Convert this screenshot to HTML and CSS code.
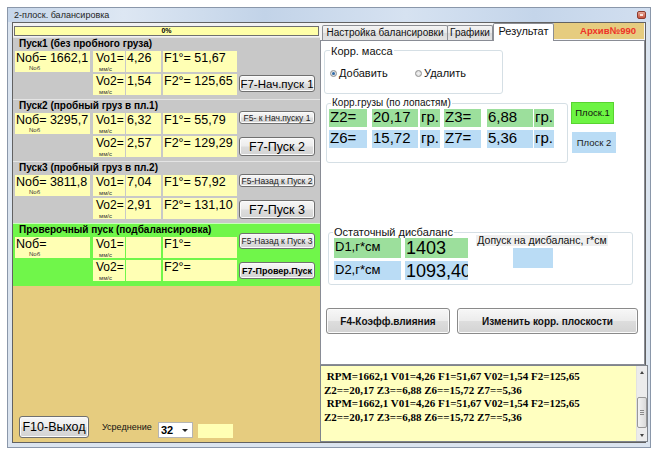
FILE: index.html
```html
<!DOCTYPE html>
<html lang="ru">
<head>
<meta charset="utf-8">
<title>2-плоск. балансировка</title>
<link rel="stylesheet" href="styles.css">
</head>
<body>
<div class="win">
  <div class="titlebar"><span class="ttl">2-плоск. балансировка</span><span class="closeb"><span></span></span></div>
  <div class="client">
    <div class="left">
      <div class="pw"><div class="prog">0%</div></div>

      <div class="grp">
        <div class="gt">Пуск1 (без пробного груза)</div>
        <div class="row">
          <div class="c nob">Nоб= 1662,1<span class="sub sub-n">Nоб</span></div>
          <div class="c vo">Vo1=<span class="sub sub-v">мм/с</span></div>
          <div class="c val">4,26</div>
          <div class="c fv">F1°= 51,67</div>
        </div>
        <div class="row">
          <div class="nob"></div>
          <div class="c vo">Vo2=<span class="sub sub-v">мм/с</span></div>
          <div class="c val">1,54</div>
          <div class="c fv">F2°= 125,65</div>
          <div class="btn b1">F7-Нач.пуск 1</div>
        </div>
      </div>

      <div class="grp">
        <div class="gt">Пуск2 (пробный груз в пл.1)</div>
        <div class="row">
          <div class="c nob">Nоб= 3295,7<span class="sub sub-n">Nоб</span></div>
          <div class="c vo">Vo1=<span class="sub sub-v">мм/с</span></div>
          <div class="c val">6,32</div>
          <div class="c fv">F1°= 55,79</div>
          <div class="btn bs bs2">F5- к Нач.пуску 1</div>
        </div>
        <div class="row">
          <div class="nob"></div>
          <div class="c vo">Vo2=<span class="sub sub-v">мм/с</span></div>
          <div class="c val">2,57</div>
          <div class="c fv">F2°= 129,29</div>
          <div class="btn b2">F7-Пуск 2</div>
        </div>
      </div>

      <div class="grp">
        <div class="gt">Пуск3 (пробный груз в пл.2)</div>
        <div class="row">
          <div class="c nob">Nоб= 3811,8<span class="sub sub-n">Nоб</span></div>
          <div class="c vo">Vo1=<span class="sub sub-v">мм/с</span></div>
          <div class="c val">7,04</div>
          <div class="c fv">F1°= 57,92</div>
          <div class="btn bs bs3">F5-Назад к Пуск 2</div>
        </div>
        <div class="row">
          <div class="nob"></div>
          <div class="c vo">Vo2=<span class="sub sub-v">мм/с</span></div>
          <div class="c val">2,91</div>
          <div class="c fv">F2°= 131,10</div>
          <div class="btn b3">F7-Пуск 3</div>
        </div>
      </div>

      <div class="grp green">
        <div class="gt">Проверочный пуск (подбалансировка)</div>
        <div class="row">
          <div class="c nob">Nоб=<span class="sub sub-n">Nоб</span></div>
          <div class="c vo">Vo1=<span class="sub sub-v">мм/с</span></div>
          <div class="c val"></div>
          <div class="c fv">F1°=</div>
          <div class="btn bs bs4">F5-Назад к Пуск 3</div>
        </div>
        <div class="row">
          <div class="nob"></div>
          <div class="c vo">Vo2=<span class="sub sub-v">мм/с</span></div>
          <div class="c val"></div>
          <div class="c fv">F2°=</div>
          <div class="btn b4">F7-Провер.Пуск</div>
        </div>
      </div>

      <div class="fill">
        <div class="btn bexit">F10-Выход</div>
        <span class="avg">Усреднение</span>
        <div class="combo"><span>32</span><i class="dd"></i></div>
        <div class="ybox"></div>
      </div>
    </div>

    <div class="right">
      <div class="tabs">
        <div class="tab t1">Настройка балансировки</div>
        <div class="tab t2">Графики</div>
        <div class="tab sel">Результат</div>
        <div class="arch">Архив№990</div>
      </div>
      <div class="page">
        <div class="gbox kmass">
          <div class="gbt">Корр. масса</div>
          <div class="radios">
            <label class="rad r1"><i class="rb on"></i>Добавить</label>
            <label class="rad"><i class="rb"></i>Удалить</label>
          </div>
        </div>

        <div class="zrow">
          <div class="gbox kgr">
            <div class="gbt small">Корр.грузы (по лопастям)</div>
            <div class="zg">
              <div class="zr gr">
                <div class="z w38">Z2=</div><div class="z w46 m5">20,17</div><div class="z w20 m2">гр.</div>
                <div class="z w37 m4">Z3=</div><div class="z w46 m6">6,88</div><div class="z w20 m1">гр.</div>
              </div>
              <div class="zr bl">
                <div class="z w38">Z6=</div><div class="z w46 m5">15,72</div><div class="z w20 m2">гр.</div>
                <div class="z w37 m4">Z7=</div><div class="z w46 m6">5,36</div><div class="z w20 m1">гр.</div>
              </div>
            </div>
          </div>
          <div class="pl">
            <div class="pl1">Плоск.1</div>
            <div class="pl2">Плоск 2</div>
          </div>
        </div>

        <div class="gbox ost">
          <div class="gbt">Остаточный дисбаланс</div>
          <div class="ostb">
            <div class="dg">
              <div class="dr gr"><div class="dl">D1,г*см</div><div class="dv">1403</div></div>
              <div class="dr bl"><div class="dl">D2,г*см</div><div class="dv">1093,40</div></div>
            </div>
            <div class="dop">
              <div class="dopl">Допуск на дисбаланс, г*см</div>
              <div class="dopv"></div>
            </div>
          </div>
        </div>

        <div class="brow">
          <div class="btn bb bf4">F4-Коэфф.влияния</div>
          <div class="btn bb bchg">Изменить корр. плоскости</div>
        </div>
      </div>

      <div class="log">
        <div class="logt"> RPM=1662,1 V01=4,26 F1=51,67 V02=1,54 F2=125,65
Z2==20,17 Z3==6,88 Z6==15,72 Z7==5,36
 RPM=1662,1 V01=4,26 F1=51,67 V02=1,54 F2=125,65
Z2==20,17 Z3==6,88 Z6==15,72 Z7==5,36</div>
        <div class="sb">
          <div class="sba"><i class="up"></i></div>
          <div class="thumb"><i></i><i></i><i></i></div>
          <div class="sbf"></div>
          <div class="sba"><i class="down"></i></div>
        </div>
      </div>
    </div>
  </div>
</div>
</body>
</html>
```

FILE: styles.css
```css
* { box-sizing: border-box; }
html, body { margin: 0; padding: 0; background: #fff; }
body {
  font-family: "Liberation Sans", Arial, sans-serif;
  color: #000;
  width: 662px;
  height: 458px;
  overflow: hidden;
}

.win {
  margin: 7px 0 0 7px;
  width: 644px;
  height: 441px;
  border: 1px solid #8a97aa;
  background: #dbe4ef;
  padding: 0 4px 4px 4px;
  display: flex;
  flex-direction: column;
}
.titlebar {
  height: 14px;
  margin: 0 -4px;
  padding: 0 4px 0 6px;
  display: flex;
  align-items: center;
  justify-content: space-between;
  background: linear-gradient(90deg, #c6d6ea 0%, #dde7f3 18%, #c2d3e8 40%, #d6e2f1 62%, #c4d5ea 82%, #d2dff0 100%);
}
.ttl { font-size: 9px; line-height: 12px; color: #1e1e1e; }
.closeb {
  width: 9px; height: 8px;
  border: 1px solid #8e3a2c;
  border-radius: 2px;
  background: linear-gradient(#e8a898, #c4533e);
  display: flex; align-items: center; justify-content: center;
}
.closeb span { width: 3px; height: 2px; background: #fbe3dc; }

.client {
  flex: 1;
  border: 1px solid #626262;
  display: flex;
  background: #f2f2f2;
}
.left { width: 307px; display: flex; flex-direction: column; }
.right { flex: 1; display: flex; flex-direction: column; min-width: 0; }

/* progress */
.pw { height: 14px; padding: 3px 1px 0 1px; background: #f2f2f2; }
.prog {
  height: 10px;
  border: 1px solid #6f6f6f;
  background: #ffffa8;
  font: bold 7px/8px "Liberation Sans", Arial, sans-serif;
  text-align: center;
}

/* groups */
.grp {
  height: 62px;
  background: #c8c8c8;
  border-top: 1px solid #e4e4e4;
  padding-left: 2px;
}
.grp.green { height: 63px; background: #70f64a; border-top-color: #c9ffbd; }
.gt {
  height: 13px;
  padding-left: 4px;
  font: bold 10px/11px "Liberation Sans", Arial, sans-serif;
  white-space: nowrap;
}
.row { display: flex; align-items: flex-start; height: 21px; }
.row + .row { margin-top: 2px; }
.c {
  background: #ffffb4;
  height: 21px;
  font: 12.5px/14px "Liberation Sans", Arial, sans-serif;
  white-space: nowrap;
  overflow: hidden;
}
.nob { width: 75px; margin-right: 3px; padding-left: 1px; flex: none; }
.vo { width: 32px; margin-right: 1px; padding-left: 3px; flex: none; font-size: 12px; }
.val { width: 35px; margin-right: 2px; padding-left: 1px; flex: none; }
.fv { width: 74px; margin-right: 2px; padding-left: 1px; flex: none; }
.sub { display: block; font-size: 6px; line-height: 6px; color: #333; }
.sub-n { margin: 0 0 0 13px; }
.sub-v { margin: 1px 0 0 3px; }

.btn {
  flex: none;
  display: flex;
  align-items: center;
  justify-content: center;
  white-space: nowrap;
  border: 1px solid #707070;
  border-radius: 3px;
  background: linear-gradient(#f7f7f7 0%, #ececec 48%, #dddddd 52%, #d3d3d3 100%);
  box-shadow: inset 0 0 0 1px #fbfbfb;
  font-family: "Liberation Sans", Arial, sans-serif;
  color: #000;
}
.b1 { width: 76px; height: 17px; margin-top: 1px; font-size: 11.5px; }
.b2 { width: 76px; height: 19px; margin-top: 1px; font-size: 12.5px; }
.b3 { width: 76px; height: 19px; margin-top: 2px; font-size: 12.5px; }
.b4 { width: 76px; height: 17px; margin-top: 2px; font-size: 9px; font-weight: bold; }
.bs { width: 76px; font-size: 8.5px; color: #222; }
.bs2 { height: 13px; margin-top: -2px; }
.bs3 { height: 13px; margin-top: -1px; }
.bs4 { height: 16px; margin-top: -4px; }

.fill {
  flex: 1;
  background: #e6cc7f;
  display: flex;
  align-items: flex-end;
  padding: 0 0 4px 6px;
}
.bexit { width: 70px; height: 22px; font-size: 12.5px; }
.avg { margin: 0 0 5px 13px; font-size: 9px; line-height: 11px; width: 51px; white-space: nowrap; color: #111; }
.combo {
  margin-left: 5px;
  width: 35px; height: 16px;
  background: #fff;
  border: 1px solid #b4b4b4;
  display: flex; align-items: center; justify-content: space-between;
  padding: 0 4px 0 2px;
  font: bold 11px/14px "Liberation Sans", Arial, sans-serif;
}
.dd { width: 0; height: 0; border-left: 3px solid transparent; border-right: 3px solid transparent; border-top: 3px solid #222; }
.ybox { margin-left: 5px; width: 35px; height: 14px; background: #ffffb4; }

/* tabs */
.tabs {
  height: 17px;
  display: flex;
  align-items: flex-end;
  padding-left: 2px;
  background: #f4f4f4;
}
.tab {
  height: 15px;
  border: 1px solid #8c8e94;
  border-bottom: none;
  border-radius: 2px 2px 0 0;
  background: linear-gradient(#f4f4f4 0%, #e9e9e9 48%, #dadada 52%, #e3e3e3 100%);
  font-size: 10px;
  line-height: 13px;
  text-align: center;
  white-space: nowrap;
  color: #111;
}
.t1 { width: 126px; }
.t2 { width: 46px; margin-left: -1px; }
.tab.sel {
  width: 61px;
  height: 18px;
  margin-bottom: -1px;
  background: #fff;
  font-size: 11px;
  line-height: 15px;
  position: relative;
  z-index: 1;
}
.arch {
  align-self: flex-start;
  width: 90px;
  height: 16px;
  background: #e6cc7f;
  color: #ee3327;
  font-weight: bold;
  font-size: 9.5px;
  line-height: 16px;
  text-align: right;
  padding-right: 8px;
}

.page {
  height: 325px;
  border: 1px solid #898c95;
  background: #fff;
}
.gbox { border: 1px solid #d5dfe5; border-radius: 3px; }
.gbt {
  width: fit-content;
  background: #fff;
  padding: 0 1px;
  margin: -7px 0 0 4px;
  font-size: 11px;
  line-height: 14px;
  white-space: nowrap;
  color: #111;
}
.gbt.small { font-size: 10px; line-height: 12px; }

.kmass { margin: 9px 0 0 3px; width: 179px; height: 44px; }
.kmass .gbt { margin-left: 5px; }
.radios { display: flex; margin-top: 8px; padding-left: 5px; height: 14px; align-items: center; }
.rad { display: flex; align-items: center; font-size: 11px; line-height: 14px; color: #111; }
.r1 { width: 85px; }
.rb {
  width: 7px; height: 7px;
  border-radius: 50%;
  border: 1px solid #8f8f8f;
  background: radial-gradient(circle, #f4f4f4, #d4d4d4);
  margin-right: 2px;
  display: flex; align-items: center; justify-content: center;
}
.rb.on::after { content: ""; width: 3px; height: 3px; border-radius: 50%; background: #2f6aa8; }

.zrow { display: flex; margin: 9px 0 0 5px; }
.kgr { width: 242px; height: 60px; }
.zg { padding-left: 2px; }
.zr { display: flex; height: 18px; }
.zr + .zr { margin-top: 3px; }
.z { height: 18px; font-size: 15px; line-height: 15px; white-space: nowrap; overflow: hidden; padding-left: 1px; }
.gr .z, .gr .dl, .gr .dv { background: #9cdf9c; }
.bl .z, .bl .dl, .bl .dv { background: #badcf5; }
.w38 { width: 38px; } .w46 { width: 46px; } .w20 { width: 20px; } .w37 { width: 37px; }
.m5 { margin-left: 5px; } .m2 { margin-left: 2px; } .m4 { margin-left: 4px; } .m6 { margin-left: 6px; } .m1 { margin-left: 1px; }
.pl { margin: -1px 0 0 3px; }
.pl1 {
  width: 43px; height: 22px;
  background: #6df443;
  border: 1px solid #58d330;
  font-size: 9.5px; line-height: 20px; text-align: center; color: #111;
}
.pl2 {
  width: 44px; height: 21px;
  margin: 8px 0 0 1px;
  background: #badcf5;
  font-size: 9.5px; line-height: 21px; text-align: center; color: #222;
}

.ost { margin: 69px 0 0 7px; width: 305px; height: 53px; }
.ost .gbt { line-height: 12px; }
.ostb { display: flex; align-items: flex-start; padding-left: 5px; }
.dr { display: flex; height: 20px; }
.dr + .dr { margin-top: 3px; height: 19px; }
.dl { width: 67px; padding-left: 1px; font-size: 13px; line-height: 17px; }
.dv { width: 63px; margin-left: 4px; padding-left: 1px; font-size: 18px; line-height: 20px; white-space: nowrap; overflow: hidden; }
.dop { margin: -3px 0 0 8px; }
.dopl { width: 132px; height: 11px; background: #efefef; font-size: 10.5px; line-height: 11px; text-align: center; white-space: nowrap; color: #111; }
.dopv { width: 40px; height: 20px; margin: 2px 0 0 37px; background: #badcf5; }

.brow { display: flex; margin: 23px 0 0 5px; }
.bb { height: 26px; font: bold 10px "Liberation Sans", Arial, sans-serif; color: #111; border-color: #8a8a8a; }
.bf4 { width: 124px; }
.bchg { width: 181px; margin-left: 7px; }

/* log */
.log {
  flex: 1;
  margin-right: -3px;
  display: flex;
  border: 1px solid #7f848c;
  background: #ffffc0;
}
.logt {
  flex: 1;
  padding: 4px 0 0 3px;
  font: bold 11px/13.5px "Liberation Serif", "Times New Roman", serif;
  white-space: pre;
  overflow: hidden;
}
.sb { width: 11px; display: flex; flex-direction: column; background: #ececec; border-left: 1px solid #e2e2e2; }
.sba { height: 12px; display: flex; align-items: center; justify-content: center; }
.up { width: 0; height: 0; border-left: 2px solid transparent; border-right: 2px solid transparent; border-bottom: 3px solid #444; }
.down { width: 0; height: 0; border-left: 2px solid transparent; border-right: 2px solid transparent; border-top: 3px solid #444; }
.thumb {
  margin-top: 19px;
  height: 31px;
  border: 1px solid #989898;
  border-radius: 2px;
  background: linear-gradient(90deg, #f3f3f3, #dadada);
  display: flex; flex-direction: column; align-items: center; justify-content: center; gap: 1px;
}
.thumb i { width: 4px; height: 1px; background: #8a8a8a; }
.sbf { flex: 1; }
```
